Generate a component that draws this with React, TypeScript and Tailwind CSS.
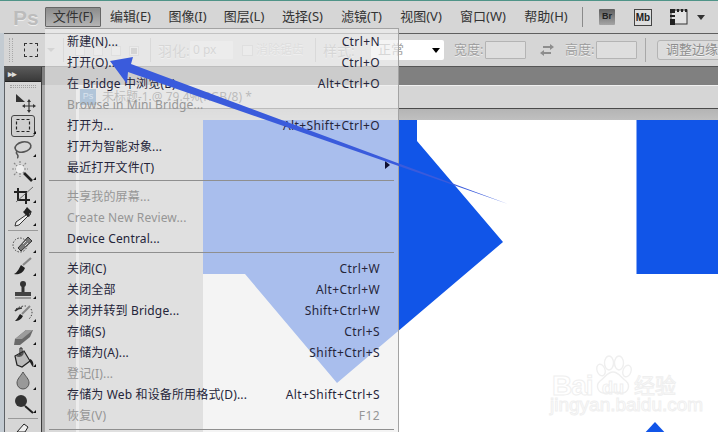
import React from "react";

const uiFont = "font-['Noto_Sans','Noto_Sans_CJK_SC',sans-serif]";

const menuBar = [
  { name: "文件(F)", w: "w-[56px]" },
  { name: "编辑(E)", w: "w-[55px]" },
  { name: "图像(I)", w: "w-[55px]" },
  { name: "图层(L)", w: "w-[54px]" },
  { name: "选择(S)", w: "w-[59px]" },
  { name: "滤镜(T)", w: "w-[55px]" },
  { name: "视图(V)", w: "w-[60px]" },
  { name: "窗口(W)", w: "w-[60px]" },
  { name: "帮助(H)", w: "w-[62px]" },
];

interface IRow {
  label: string;
  keys?: string;
  off?: boolean;
  more?: boolean;
}

const fileGroups: IRow[][] = [
  [
    { label: "新建(N)...", keys: "Ctrl+N" },
    { label: "打开(O)...", keys: "Ctrl+O" },
    { label: "在 Bridge 中浏览(B)...", keys: "Alt+Ctrl+O" },
    { label: "Browse in Mini Bridge...", off: true },
    { label: "打开为...", keys: "Alt+Shift+Ctrl+O" },
    { label: "打开为智能对象..." },
    { label: "最近打开文件(T)", more: true },
  ],
  [
    { label: "共享我的屏幕...", off: true },
    { label: "Create New Review...", off: true },
    { label: "Device Central..." },
  ],
  [
    { label: "关闭(C)", keys: "Ctrl+W" },
    { label: "关闭全部", keys: "Alt+Ctrl+W" },
    { label: "关闭并转到 Bridge...", keys: "Shift+Ctrl+W" },
    { label: "存储(S)", keys: "Ctrl+S" },
    { label: "存储为(A)...", keys: "Shift+Ctrl+S" },
    { label: "登记(I)...", off: true },
    { label: "存储为 Web 和设备所用格式(D)...", keys: "Alt+Shift+Ctrl+S" },
    { label: "恢复(V)", keys: "F12", off: true },
  ],
];

const MenuRow: React.FC<IRow> = ({ label, keys, off, more }) => (
  <div className={`relative flex h-[21px] items-center justify-between pl-[22px] pr-[18px] text-[12px] ${off ? "text-[#969696]" : "text-[#25253a]"}`}>
    <span className="whitespace-nowrap tracking-[0.15px]">{label}</span>
    {keys && <span className="whitespace-nowrap tracking-[0.4px]">{keys}</span>}
    {more && <span className="absolute right-[8px] top-[4px] h-0 w-0 border-y-[4px] border-l-[5px] border-y-transparent border-l-[#101030]" />}
  </div>
);

const FileMenu = () => (
  <div className="absolute left-[45px] top-[28px] z-10 h-[404px] w-[354px] border-r border-t border-[#a3a3a3] bg-[rgba(239,239,239,0.685)] pt-[2px]">
    {fileGroups.map((group, i) => (
      <div key={i}>
        {group.map((row) => (
          <MenuRow key={row.label} {...row} />
        ))}
        <div className={`mx-[4px] border-t border-[#8f8f8f] ${i === 0 ? "mb-[5px] mt-[2px] h-[1px]" : i === 1 ? "mb-[5px] mt-[3px] h-[1px]" : "mt-[3px]"}`} />
      </div>
    ))}
  </div>
);

const Field = ({ w }: { w: string }) => <div className={`h-[18px] rounded-[1px] border border-[#b4b4b4] bg-[#dedede] ${w}`} />;

const ModeBox = ({ on }: { on?: boolean }) => (
  <span className="flex h-[10px] w-[10px] items-center justify-center border border-[#bdbdbd] bg-[#e2e2e2]">
    {on && <span className="h-[6px] w-[6px] bg-[#9a9a9a]" />}
  </span>
);

const OptionsBar = () => (
  <div className="flex h-[34px] items-center border-y border-b-[#555] border-t-[#5f5f5f] bg-[#d6d6d6] text-[14px] text-[#a0a0a0] [text-shadow:0_1px_0_#f0f0f0] [&>*]:shrink-0">
    <div className="ml-[5px] h-[24px] w-[4px] border-x border-dotted border-[#a8a8a8]" />
    <div className="ml-[11px] h-[14px] w-[14px] border border-dashed border-[#333]" />
    <span className="ml-[9px] h-0 w-0 border-x-[4px] border-t-[4px] border-x-transparent border-t-[#9a9a9a]" />
    <div className="ml-[8px] h-[24px] w-px bg-[#a8a8a8]" />
    <div className="ml-[11px] flex w-[64px] gap-[8px] pt-[2px]">
      <ModeBox />
      <ModeBox />
      <ModeBox />
      <ModeBox on />
    </div>
    <div className="ml-[11px] h-[24px] w-px bg-[#a8a8a8]" />
    <span className="ml-[7px] w-[32px] whitespace-nowrap">羽化:</span>
    <div className="flex h-[18px] w-[43px] items-center rounded-[1px] bg-[#e6e6e6] pl-[3px] text-[12px]">0 px</div>
    <span className="ml-[9px] h-[11px] w-[11px] border border-[#bcbcbc] bg-[#e2e2e2]" />
    <span className="ml-[3px] w-[48px] whitespace-nowrap text-[12px] text-[#b8b8b8]">消除锯齿</span>
    <div className="ml-[11px] h-[24px] w-px bg-[#a8a8a8]" />
    <span className="ml-[7px] w-[40px] whitespace-nowrap">样式:</span>
    <div className="ml-[8px] flex h-[20px] w-[73px] items-center justify-between rounded-[2px] bg-white pl-[7px] pr-[4px] text-[13px] [text-shadow:none]">
      正常
      <span className="h-0 w-0 border-x-[4px] border-t-[5px] border-x-transparent border-t-black" />
    </div>
    <span className="ml-[10px] w-[31px] whitespace-nowrap text-[13px]">宽度:</span>
    <Field w="w-[41px]" />
    <svg width="14" height="12" viewBox="0 0 14 12" className="ml-[14px] mr-[11px]" fill="#8d8d8d">
      <path d="M3 2h7V0l4 3-4 3V4H3zM11 8H4V6l-4 3 4 3v-2h7z" />
    </svg>
    <span className="w-[31px] whitespace-nowrap text-[13px]">高度:</span>
    <Field w="w-[41px]" />
    <div className="ml-[8px] h-[24px] w-px bg-[#a8a8a8]" />
    <div className="ml-[11px] flex h-[20px] w-[80px] items-center whitespace-nowrap rounded-[3px] border border-[#b4b4b4] bg-[#dcdcdc] pl-[8px] text-[13px] text-[#8e8e8e]">
      调整边缘...
    </div>
  </div>
);

const TopBar = () => (
  <div className="flex h-[33px] items-center border-t border-[#4f9488] bg-[#d6d6d6] pl-[13px]">
    <span className="w-[24px] text-[21px] font-bold leading-none text-[#bcbcbc] [text-shadow:0_1px_0_#eee] font-['Liberation_Sans',sans-serif]">Ps</span>
    <div className="ml-[8px] flex gap-[2px] text-[13px] text-[#333]">
      {menuBar.map((item, i) => (
        <span
          key={item.name}
          className={`flex h-[20px] items-center justify-center whitespace-nowrap rounded-[1px] ${item.w} ${
            i === 0 ? "border border-[#666] bg-gradient-to-b from-[#8c8c8c] to-[#b4b4b4]" : ""
          }`}
        >
          {item.name}
        </span>
      ))}
    </div>
    <div className="ml-[5px] h-[20px] w-px bg-[#8a8a8a]" />
    <span className="ml-[16px] flex h-[16px] w-[16px] items-center justify-center rounded-[1px] bg-gradient-to-b from-[#5e5e5e] to-[#a5a5a5] text-[9px] font-bold text-[#222] font-['Liberation_Sans',sans-serif]">
      Br
    </span>
    <span className="ml-[19px] flex h-[17px] w-[18px] items-center justify-center border border-[#444] bg-[#dedede] text-[10px] font-bold text-[#222] font-['Liberation_Sans',sans-serif]">
      Mb
    </span>
    <svg width="18" height="16" viewBox="0 0 18 16" className="ml-[18px]">
      <rect x="1" y="1" width="16" height="14" fill="#e2e2e2" stroke="#333" />
      <path d="M0 0h5v4H0zM0 6h5v2H0zM0 10h5v6H0zM7 0h2v3H7zM11 0h2v3h-2zM15 0h2v3h-2z" fill="#222" />
    </svg>
    <span className="ml-[9px] h-0 w-0 border-x-[4px] border-t-[5px] border-x-transparent border-t-[#333]" />
  </div>
);

// greyscale tool glyphs, 28x22 box with the tool centred at 14,11
const toolGlyphs: { d: React.ReactNode; more?: boolean; on?: boolean }[] = [
  {
    d: (
      <>
        <path d="M7 2l9 8H7z" fill="#333" />
        <path d="M20 9v10M15 14h10" stroke="#333" strokeWidth="1.2" />
        <path d="M20 7l2 3h-4zM20 21l2-3h-4zM13 14l3-2v4zM27 14l-3-2v4z" fill="#333" />
      </>
    ),
  },
  {
    on: true,
    more: true,
    d: <rect x="7.5" y="5.5" width="13" height="12" fill="none" stroke="#222" strokeWidth="1.2" strokeDasharray="3 2" />,
  },
  {
    more: true,
    d: (
      <>
        <ellipse cx="14" cy="10" rx="8" ry="5" fill="none" stroke="#555" strokeWidth="1.6" transform="rotate(-12 14 10)" />
        <path d="M8 14c-2 3 1 3 1 5s-1 2-1 2" fill="none" stroke="#555" strokeWidth="1.6" />
      </>
    ),
  },
  {
    more: true,
    d: (
      <>
        <path d="M11 1v16M3 9h16M5 3l12 12M17 3L5 15" stroke="#888" strokeWidth="1.2" strokeDasharray="2 1" />
        <circle cx="11" cy="9" r="4" fill="#eee" />
        <path d="M15 13l8 8" stroke="#222" strokeWidth="2.6" />
      </>
    ),
  },
  {
    more: true,
    d: (
      <>
        <path d="M9 5v12h12M5 9h12v12" fill="none" stroke="#222" strokeWidth="2" />
        <path d="M7 19L24 4" stroke="#555" strokeWidth="0.8" />
      </>
    ),
  },
  {
    more: true,
    d: (
      <>
        <path d="M17 3l5 5-2 1-10 10-4 1 1-4L17 9z" fill="#efefef" stroke="#333" strokeWidth="1" />
        <path d="M16 4l2-3 5 5-3 2 1 2-2 1-5-5z" fill="#222" />
      </>
    ),
  },
  {
    more: true,
    d: (
      <>
        <circle cx="11" cy="12" r="7" fill="none" stroke="#444" strokeDasharray="1.5 1.5" />
        <path d="M9 15L19 4l4 4-11 10z" fill="#777" stroke="#333" />
        <path d="M14 11l3-3M16 13l3-3" stroke="#ddd" />
      </>
    ),
  },
  {
    more: true,
    d: (
      <>
        <path d="M5 18c3 1 9 0 11-6l-4-3c-2 3-3 7-7 9z" fill="#222" />
        <path d="M14 9l8-7" stroke="#888" strokeWidth="2.2" />
      </>
    ),
  },
  {
    more: true,
    d: (
      <>
        <circle cx="14" cy="5" r="3" fill="#333" />
        <path d="M12.5 7h3v6h-3z" fill="#333" />
        <path d="M6 13h16v4H6z" fill="#444" />
        <path d="M6 18h16v2H6z" fill="#999" />
      </>
    ),
  },
  {
    more: true,
    d: (
      <>
        <path d="M6 19c3 0 6-1 8-5l-3-2c-2 3-3 5-5 7z" fill="#222" />
        <path d="M13 12l8-8" stroke="#888" strokeWidth="2" />
        <path d="M7 7c4-3 8-3 10-3M22 7c2 3 1 7-2 10" fill="none" stroke="#444" strokeDasharray="1.5 1.5" />
        <path d="M6 9c2-2 4-3 7-3" stroke="#333" strokeWidth="1.6" fill="none" />
      </>
    ),
  },
  {
    more: true,
    d: (
      <>
        <path d="M6 14L17 5h7l-3 7-10 8H5z" fill="#6a6a6a" />
        <path d="M6 14L17 5h7L13 14z" fill="#9c9c9c" />
      </>
    ),
  },
  {
    more: true,
    d: (
      <>
        <path d="M6 9l9-5 6 10-8 6-5-2z" fill="#bbb" stroke="#222" strokeWidth="1.2" />
        <path d="M7 9c3 2 8 1 8-5" fill="#555" />
        <path d="M11 8V1h2v5" fill="none" stroke="#222" />
        <path d="M21 12c3 1 4 5 3 8-2-2-2-4-4-6z" fill="#222" />
      </>
    ),
  },
  {
    more: true,
    d: <path d="M14 2c3 5 6 7 6 11a6 6 0 0 1-12 0c0-4 3-6 6-11z" fill="#999" stroke="#555" />,
  },
  {
    more: true,
    d: (
      <>
        <circle cx="12" cy="8" r="6" fill="#333" />
        <path d="M16 13l8 7" stroke="#222" strokeWidth="2" />
      </>
    ),
  },
];

const Tool = ({ d, more, on }: { d: React.ReactNode; more?: boolean; on?: boolean }) => (
  <div className="relative h-[22.8px]">
    {on && <div className="absolute left-[6px] top-[1px] h-[22px] w-[24px] rounded-[3px] border border-[#444] bg-[#cfcfcf]" />}
    <svg width="28" height="22" viewBox="0 0 28 22" className="absolute left-[4px] top-0">
      {d}
      {more && <path d="M27 17v3h-3z" fill="#111" />}
    </svg>
  </div>
);

const ToolBar = () => (
  <div className="flex h-full w-[42px] shrink-0 border-r-0">
    <div className="w-[5px] border-r border-[#5d6166] bg-[#c3cbd2]" />
    <div className="flex w-[37px] flex-col overflow-hidden border-r border-[#3c3c3c] bg-[#d6d6d6]">
      <div className="flex h-[14px] items-center bg-gradient-to-b from-[#5a5a5a] to-[#3a3a3a] pl-[3px] text-[9px] font-bold leading-none text-[#ddd]">
        <span className="tracking-[-1px] font-['Liberation_Sans',sans-serif]">▸▸</span>
      </div>
      <div className="h-[10.6px] border-t border-[#222] pt-[3px]">
        <div className="mx-[5px] h-[3px] border-y border-dotted border-[#a0a0a0]" />
      </div>
      {toolGlyphs.slice(0, 6).map((t, i) => (
        <Tool key={i} {...t} />
      ))}
      <div className="mx-[3px] mb-[2px] mt-[2px] h-px shrink-0 bg-[#9a9a9a]" />
      {toolGlyphs.slice(6).map((t, i) => (
        <Tool key={i} {...t} />
      ))}
      <div className="mx-[3px] mt-[2px] h-px shrink-0 bg-[#9a9a9a]" />
      <svg width="28" height="10" viewBox="0 0 28 10" className="ml-[4px] mt-[3px] shrink-0">
        <path d="M8 10l7-8 4 3-3 5z" fill="#eee" stroke="#222" />
      </svg>
    </div>
  </div>
);

const BaiduMark = () => (
  <div className="absolute left-[345px] top-[232px] h-[70px] w-[135px] font-['Liberation_Sans',sans-serif] leading-none text-transparent [-webkit-text-stroke:1px_#efefef]">
    <svg width="42" height="44" viewBox="0 0 42 44" className="absolute left-[44px] top-[3px]" fill="#fff" stroke="#efefef" strokeWidth="1.4">
      <ellipse cx="9" cy="15" rx="4" ry="6" transform="rotate(-20 9 15)" />
      <ellipse cx="17" cy="8" rx="4.5" ry="7" />
      <ellipse cx="27" cy="8" rx="4.5" ry="7" />
      <ellipse cx="35" cy="16" rx="4" ry="6" transform="rotate(20 35 16)" />
      <path d="M21 17c6 0 8 6 13 9 5 5 2 13-6 12-4-1-10-1-14 0-8 1-11-7-6-12 5-3 7-9 13-9z" />
    </svg>
    <span className="absolute left-[4px] top-[20px] text-[28px] font-bold tracking-[-1px]">Bai</span>
    <span className="absolute left-[54px] top-[27px] text-[18px] font-bold">du</span>
    <span className="absolute left-[86px] top-[22px] whitespace-nowrap text-[21px] font-['Noto_Sans_CJK_SC',sans-serif]">经验</span>
    <span className="absolute left-[2px] top-[43px] whitespace-nowrap text-[19px]">jingyan.baidu.com</span>
  </div>
);

const Canvas = () => (
  <div className="relative flex-1 overflow-hidden bg-white">
    <svg viewBox="203 120 515 312" className="h-[312px] w-[515px]">
      <path d="M203 120H417V141L503 242L337 383L245 274H203Z" fill="#1155e8" />
      <path d="M636.5 120H718V274H636.5Z" fill="#1155e8" />
      <path d="M655 422L668 436H642Z" fill="#1155e8" />
    </svg>
    <BaiduMark />
  </div>
);

const Workspace = () => (
  <div className="flex min-w-0 flex-1 flex-col">
    <div className="h-[18px] shrink-0 bg-[#808080]" />
    <div className="flex min-h-0 flex-1">
      <div className="w-[34px] shrink-0 bg-[#a8a8a8]" />
      <div className="w-[3px] shrink-0 bg-[#e4e4e4]" />
      <div className="flex min-w-0 flex-1 flex-col">
        <div className="flex h-[24px] shrink-0 items-center border-b border-t border-b-[#4a4a4a] border-t-[#f0f0f0] bg-[#d6d6d6] pl-[1px] text-[12px] text-[#4a4a4a]">
          <span className="flex h-[16px] w-[16px] items-center justify-center bg-[#2a6aa8] text-[9px] text-[#a8c8e8] font-['Liberation_Sans',sans-serif]">Ps</span>
          <span className="ml-[6px] whitespace-nowrap">未标题-1 @ 79.4%(RGB/8) *</span>
        </div>
        <div className="h-[11px] shrink-0 bg-gradient-to-b from-[#b4b4b4] to-[#c0c0c0]" />
        <div className="flex min-h-0 flex-1">
          <div className="w-[124px] shrink-0 bg-[#bfbfbf]" />
          <Canvas />
        </div>
      </div>
    </div>
  </div>
);

const Arrow = () => (
  <svg viewBox="0 0 718 432" className="pointer-events-none absolute inset-0 z-20 h-[432px] w-[718px]">
    <path d="M110 61L133 57L131 64L508 204L128 72L127 84Z" fill="#3a5bdc" />
  </svg>
);

const App: React.FC = () => {
  return (
    <div className={`relative flex h-[432px] w-[718px] flex-col overflow-hidden bg-[#d6d6d6] ${uiFont}`}>
      <TopBar />
      <div className="flex">
        <div className="w-[4px] shrink-0 bg-[#c3cbd2]" />
        <div className="min-w-0 flex-1">
          <OptionsBar />
        </div>
      </div>
      <div className="flex min-h-0 flex-1">
        <ToolBar />
        <Workspace />
      </div>
      <FileMenu />
      <Arrow />
    </div>
  );
};

export default App;
